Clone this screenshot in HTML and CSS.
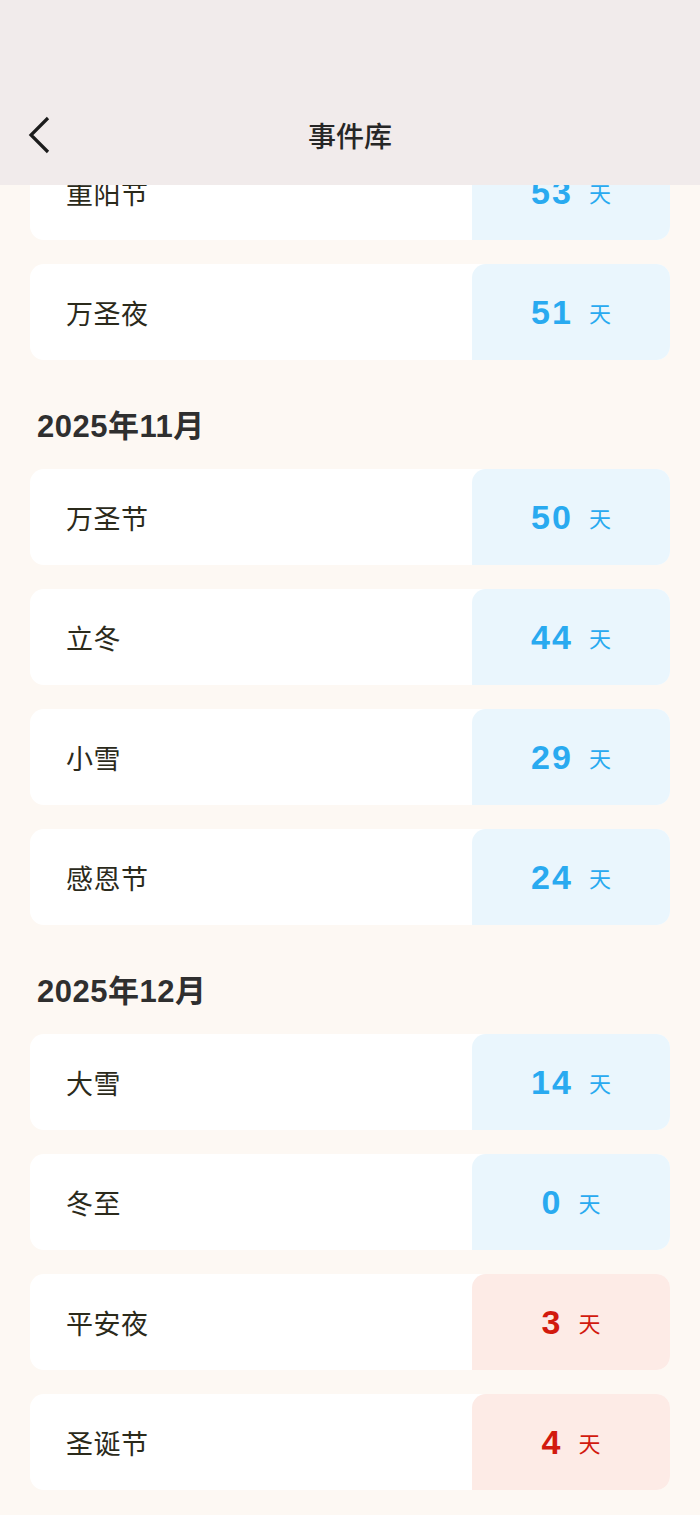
FILE: index.html
```html
<!DOCTYPE html>
<html lang="zh-CN">
<head>
<meta charset="utf-8">
<title>事件库</title>
<link rel="stylesheet" href="styles.css">
</head>
<body>
<header class="topbar">
  <div class="topbar-inner">
    <span class="back">
      <svg width="24" height="38" viewBox="0 0 24 38"><polyline points="20,2 3,19 20,36" fill="none" stroke="#1c1c1c" stroke-width="3.2" stroke-linejoin="miter" stroke-linecap="butt"/></svg>
    </span>
    <h1 class="title">事件库</h1>
  </div>
</header>
<main class="list">
  <div class="card"><div class="name">重阳节</div><div class="days blue"><span class="num">53</span><span class="unit">天</span></div></div>
  <div class="card"><div class="name">万圣夜</div><div class="days blue"><span class="num">51</span><span class="unit">天</span></div></div>
  <h2 class="month">2025年11月</h2>
  <div class="card"><div class="name">万圣节</div><div class="days blue"><span class="num">50</span><span class="unit">天</span></div></div>
  <div class="card"><div class="name">立冬</div><div class="days blue"><span class="num">44</span><span class="unit">天</span></div></div>
  <div class="card"><div class="name">小雪</div><div class="days blue"><span class="num">29</span><span class="unit">天</span></div></div>
  <div class="card"><div class="name">感恩节</div><div class="days blue"><span class="num">24</span><span class="unit">天</span></div></div>
  <h2 class="month">2025年12月</h2>
  <div class="card"><div class="name">大雪</div><div class="days blue"><span class="num">14</span><span class="unit">天</span></div></div>
  <div class="card"><div class="name">冬至</div><div class="days blue"><span class="num">0</span><span class="unit">天</span></div></div>
  <div class="card"><div class="name">平安夜</div><div class="days red"><span class="num">3</span><span class="unit">天</span></div></div>
  <div class="card"><div class="name">圣诞节</div><div class="days red"><span class="num">4</span><span class="unit">天</span></div></div>
</main>
</body>
</html>
```

FILE: styles.css
```css
html, body {
  margin: 0;
  padding: 0;
}
body {
  background: #fdf8f3;
  font-family: "Noto Sans CJK SC", "Noto Sans", sans-serif;
  width: 700px;
  height: 1515px;
  overflow: hidden;
}
.topbar {
  position: fixed;
  top: 0;
  left: 0;
  right: 0;
  height: 185px;
  background: #f1ebeb;
  z-index: 10;
}
.topbar-inner {
  position: relative;
  height: 100%;
  display: flex;
  align-items: flex-end;
  justify-content: center;
  padding-bottom: 30px;
  box-sizing: border-box;
}
.back {
  position: absolute;
  left: 28px;
  top: 116px;
  width: 24px;
  height: 38px;
  display: block;
}
.back svg { display: block; }
.title {
  margin: 0;
  font-size: 28px;
  font-weight: 500;
  color: #262626;
  line-height: 40px;
}
.list {
  padding: 144px 30px 0 30px;
  display: flex;
  flex-direction: column;
}
.card {
  height: 96px;
  background: #ffffff;
  border-radius: 14px;
  display: flex;
  margin-bottom: 24px;
}
.name {
  flex: 1;
  display: flex;
  align-items: center;
  padding-left: 36px;
  font-size: 27px;
  color: #2b2a1b;
  letter-spacing: 0.5px;
}
.days {
  width: 198px;
  border-radius: 14px 14px 14px 0;
  display: flex;
  align-items: center;
  justify-content: center;
}
.days.blue { background: #eaf6fd; color: #29aaf0; }
.days.red { background: #fdebe6; color: #d21a0e; }
.num {
  font-family: "Liberation Sans", "Noto Sans", sans-serif;
  font-weight: 700;
  font-size: 34px;
  letter-spacing: 2px;
  line-height: 40px;
}
.unit {
  margin-left: 16px;
  font-size: 22px;
  line-height: 40px;
}
.month {
  margin: -24px 0 0 0;
  height: 79px;
  display: flex;
  align-items: center;
  padding-top: 24px;
  padding-bottom: 6px;
  box-sizing: content-box;
  padding-left: 7px;
  font-family: "Liberation Sans", "Noto Sans CJK SC", sans-serif;
  font-size: 31px;
  font-weight: 700;
  color: #2f2f2f;
  letter-spacing: 0.5px;
}
```
